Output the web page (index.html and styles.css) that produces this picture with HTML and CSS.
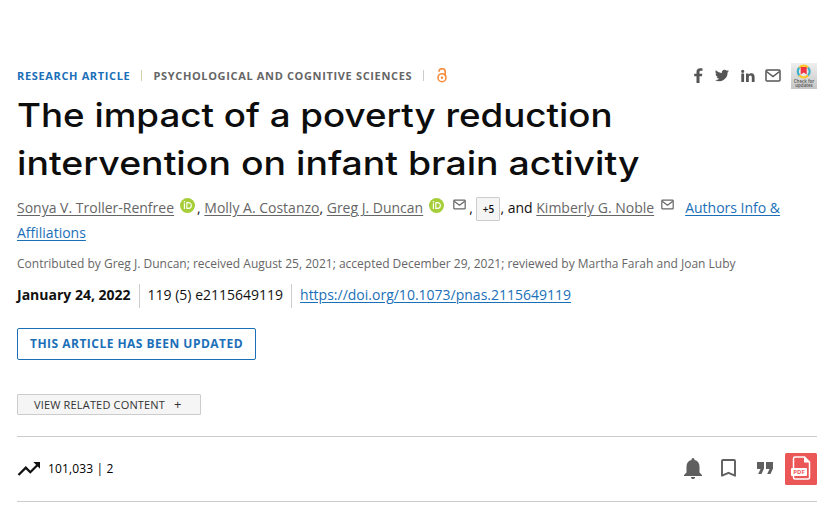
FILE: index.html
```html
<!DOCTYPE html>
<html lang="en">
<head>
<title>The impact of a poverty reduction intervention on infant brain activity</title>
<meta charset="utf-8">
<link rel="stylesheet" href="styles.css">
</head>
<body>
<svg width="0" height="0" class="defs">
    <symbol id="mail" viewBox="0 0 16 13">
        <rect x="1" y="1" width="14" height="11" rx="1" fill="none" stroke="currentColor" stroke-width="1.5"/>
        <path d="M1.5 2.5L8 7.5l6.500-5" fill="none" stroke="currentColor" stroke-width="1.5"/>
    </symbol>
    <symbol id="orcid" viewBox="0 0 16 16">
        <circle cx="8" cy="8" r="8" fill="#a6ce39"/>
        <path d="M4.700 5.700v6M7.300 4.900v6.200h1.700c4.100 0 4.100-6.200 0-6.200z" fill="none" stroke="#fff" stroke-width="1.200"/>
        <circle cx="4.700" cy="3.900" r=".8" fill="#fff"/>
    </symbol>
</svg>
<main class="article">
    <div class="topbar">
        <div class="meta">
            <a class="type" href="#">Research Article</a>
            <span class="sep"></span>
            <span class="topic">Psychological and Cognitive Sciences</span>
            <span class="sep cool"></span>
            <svg class="oa" width="10" height="15" viewBox="0 0 10 15" fill="none" stroke="#f68b3c" stroke-width="1.600">
                <circle cx="5" cy="9.700" r="4"/>
                <path d="M2 3.700c0-3.900 6.200-3.900 6.200 0v4.500"/>
                <circle cx="5" cy="9.700" r="1.200" fill="#f68b3c" stroke="none"/>
            </svg>
        </div>
        <div class="share">
            <svg class="fb" width="9" height="15" viewBox="0 0 9 15"><path fill="#555" d="M2.500 15V8.300H.2V5.700h2.300v-2C2.500 1.400 3.900.2 6 .2c1 0 2 .1 2.500.2v2.300H7c-1.300 0-1.500.6-1.500 1.500v1.500h2.800l-.4 2.600H5.500V15z"/></svg>
            <svg class="tw" width="14" height="13" viewBox="0 0 24 20"><path fill="#555" d="M24 2.400a10 10 0 0 1-2.800.8A5 5 0 0 0 23.300.5a10 10 0 0 1-3.100 1.200 4.900 4.900 0 0 0-8.400 4.500A14 14 0 0 1 1.700 1.100a4.900 4.900 0 0 0 1.500 6.600A5 5 0 0 1 1 7.100a4.900 4.900 0 0 0 3.900 4.900 5 5 0 0 1-2.200.1 4.900 4.900 0 0 0 4.600 3.400A9.900 9.900 0 0 1 0 17.500 14 14 0 0 0 21.500 5z"/></svg>
            <svg class="li" width="14" height="14" viewBox="0 0 14 14"><path fill="#555" d="M.3 4.500h2.800V13H.3zM1.700.7a1.600 1.600 0 1 1 0 3.200 1.600 1.600 0 0 1 0-3.200zM5 4.500h2.600v1.200c.5-.8 1.400-1.400 2.700-1.400 2.700 0 3.300 1.700 3.300 4V13h-2.800V8.900c0-1 0-2.300-1.400-2.300S7.800 7.700 7.800 8.800V13H5z"/></svg>
            <svg class="em" width="16" height="13"><use href="#mail"/></svg>
            <svg class="crossmark" width="26" height="26" viewBox="0 0 26 26">
                <defs><linearGradient id="tile" x2="0" y2="1"><stop stop-color="#efefef"/><stop offset="1" stop-color="#c6c6c6"/></linearGradient></defs>
                <rect width="26" height="26" fill="url(#tile)"/>
                <circle cx="12.700" cy="8.500" r="4.700" fill="#e8e8e8"/>
                <g fill="none" stroke-width="2.200">
                    <path stroke="#3eb1c8" d="M8.400 12.500A5.700 5.700 0 0 1 8.400 4.500M17 4.500a5.700 5.700 0 0 1 0 8"/>
                    <path stroke="#ffc72c" d="M8.400 4.500a5.700 5.700 0 0 1 8.600 0M8.400 12.500a5.700 5.700 0 0 0 8.600 0"/>
                </g>
                <path fill="#ef3340" d="M9.700 4h6v7.500l-3-2-3 2z"/>
                <text x="13" y="19.500" text-anchor="middle">Check for</text>
                <text x="13" y="23.800" text-anchor="middle">updates</text>
            </svg>
        </div>
    </div>

    <h1 class="title"><span class="first">The impact of a poverty reduction</span><br><span class="second">intervention on infant brain activity</span></h1>

    <div class="authors">
        <a href="#">Sonya V. Troller-Renfree</a><svg class="orcid" width="15" height="15"><use href="#orcid"/></svg><span>, </span><a href="#">Molly A. Costanzo</a><span>, </span><a href="#">Greg J. Duncan</a><svg class="orcid" width="15" height="15"><use href="#orcid"/></svg><svg class="mail" width="13" height="11"><use href="#mail"/></svg><span>, </span><button class="more">+5</button><span>, and </span><a href="#">Kimberly G. Noble</a><svg class="mail last" width="13" height="11"><use href="#mail"/></svg><a class="info" href="#"><span>Authors Info &amp;</span> <span>Affiliations</span></a>
    </div>

    <div class="history">Contributed by Greg J. Duncan; received August 25, 2021; accepted December 29, 2021; reviewed by Martha Farah and Joan Luby</div>

    <div class="citation">
        <span class="date">January 24, 2022</span>
        <span class="volume">119 (5) e2115649119</span>
        <a class="doi" href="#">https://doi.org/10.1073/pnas.2115649119</a>
    </div>

    <a class="updated" href="#">This article has been updated</a>

    <button class="related">View related content <span class="plus">+</span></button>

    <div class="toolbar">
        <div class="metrics">
            <svg width="23" height="14" viewBox="0 0 23 14"><path fill="none" stroke="#111" stroke-width="2.300" d="M1.500 13l7.300-7.300 4.500 4.500L20.500 3"/><path fill="#111" d="M16.300 0H23v6.700z"/></svg>
            <span>101,033 | 2</span>
        </div>
        <div class="tools">
            <svg class="bell" width="18" height="21" viewBox="0 0 18 21"><path fill="#5f5f5f" d="M7.500 2V1.500a1.500 1.500 0 0 1 3 0V2c3.200.7 5 3.300 5 6.500v6L18 17v1H0v-1l2.500-2.500v-6C2.500 5.300 4.300 2.700 7.500 2zM6.900 19h4.200a2.100 2.100 0 0 1-4.200 0z"/></svg>
            <svg class="save" width="15" height="18" viewBox="0 0 15 18"><path fill="none" stroke="#5f5f5f" stroke-width="1.900" stroke-linejoin="round" d="M1 2q0-1 1-1h11q1 0 1 1v14.700l-6.500-2.900L1 16.700z"/></svg>
            <svg class="cite" width="16" height="12" viewBox="0 0 16 12"><path fill="#5f5f5f" d="M0 0h7v6.500L4.500 12H1.200l2.300-5H0zM9 0h7v6.500L13.500 12h-3.300l2.300-5H9z"/></svg>
            <svg class="pdf" width="32" height="32" viewBox="0 0 32 32">
                <rect width="32" height="32" rx="1.500" fill="#eb5757"/>
                <path fill="none" stroke="#fff" stroke-width="1.500" d="M8.500 15V5.500q0-1.500 1.500-1.500h9.500l5 5v15.500q0 1.500-1.500 1.500H10q-1.500 0-1.500-1.500V23"/>
                <path fill="#fff" d="M19 4l5.500 5.500H19z"/>
                <rect x="6" y="15" width="16" height="8" rx="1" fill="#fff"/>
                <text class="pdf-label" x="14" y="21.200" text-anchor="middle">PDF</text>
            </svg>
        </div>
    </div>
</main>
</body>
</html>
```

FILE: styles.css
```css
body {margin:0;background:#fff;color:#111;font-family:"Open Sans",sans-serif;font-size:14px}
a {color:#1b6fb8;text-underline-offset:2px}
svg {flex:none}
.defs {display:block;height:0}
.article {width:800px;padding:63px 0 0 17px}

.topbar {display:flex;justify-content:space-between;align-items:center;height:26px}
.meta {display:flex;align-items:center;margin-bottom:2px;font-size:11px;font-weight:700;letter-spacing:.65px;text-transform:uppercase;white-space:nowrap}
.type {text-decoration:none}
.topic {color:#666}
.sep {width:1px;height:11px;margin:1px 11px 0 11px;background:#d5d0ad}
.sep.cool {background:#ccc;margin-right:13px}
.share {display:flex;align-items:center;color:#555}
.fb {margin-right:12px}
.tw {margin-right:12px}
.li {margin-right:10px}
.em {margin-right:10px}
.share svg:not(.crossmark) {margin-bottom:1px}
.crossmark text {font-size:4.500px;font-weight:600;fill:#555}

.title {margin:2px 0 0;color:#0d0d0d;font:500 33px/48px Inter,sans-serif;white-space:nowrap}
.title span {display:inline-block;transform-origin:left}
.first {transform:scaleX(1.113)}
.second {transform:scaleX(1.134)}

.authors {height:50px;margin-top:8px;line-height:25px}
.authors a {color:#666}
.authors .info {color:#1b6fb8}
.orcid {margin:0 2px 0 6px;vertical-align:0}
.mail {margin:0 3px 0 7px;color:#666;vertical-align:3px}
.mail.last {margin:0 11px 0 7px}
.more {box-sizing:border-box;width:24px;height:24px;margin:-2px 0;padding:0;border:1px solid #ccc;border-radius:1px;background:#f5f5f5;color:#111;font:600 10px "Open Sans",sans-serif;vertical-align:middle}

.history {margin-top:10px;color:#666;font-size:12px;line-height:18px}

.citation {display:flex;margin-top:11px;line-height:22px;height:24px}
.date {font-weight:700;padding-right:8px}
.volume {padding:0 8px;border:solid #ccc;border-width:0 1px}
.doi {padding-left:8px}

.updated {display:block;box-sizing:border-box;width:239px;height:32px;margin-top:20px;border:1px solid #1b6fb8;border-radius:2px;font-size:12px;font-weight:700;letter-spacing:.48px;line-height:30px;text-align:center;text-decoration:none;text-transform:uppercase}
.related {display:block;box-sizing:border-box;width:184px;height:21px;margin-top:34px;padding:0 0 0 16px;border:1px solid #ccc;border-radius:1px;background:#f5f5f5;color:#333;font:11px/19px "Open Sans",sans-serif;letter-spacing:.17px;text-align:left;text-transform:uppercase}
.plus {margin-left:6px;font-size:13px;line-height:1}

.toolbar {display:flex;justify-content:space-between;align-items:center;height:64px;margin-top:21px;border:solid #ccc;border-width:1px 0}
.metrics {display:flex;align-items:center;gap:8px;margin-bottom:1px;color:#000;font-size:12px;font-weight:500;letter-spacing:.15px}
.tools {display:flex;align-items:center}
.bell {margin:0 19px 2px 0}
.save {margin:0 21px 2px 0}
.cite {margin:0 12px 2px 0}
.pdf-label {font-size:6px;font-weight:700;fill:#eb5757}
```
